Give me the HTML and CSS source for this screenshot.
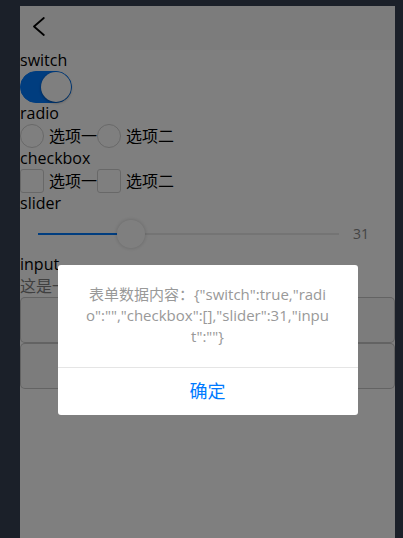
FILE: index.html
```html
<!DOCTYPE html>
<html lang="zh-CN">
<head>
<meta charset="utf-8">
<title>form</title>
<link rel="stylesheet" href="styles.css">
</head>
<body>
<div class="device">
  <header class="navbar">
    <svg class="back" width="20" height="20" viewBox="0 0 20 20"><path d="M13.8 2 L4 10.5 L13.8 19" fill="none" stroke="#000" stroke-width="1.8" stroke-linecap="round" stroke-linejoin="round"/></svg>
  </header>
  <main class="form">
    <div class="label">switch</div>
    <div class="switch on"><span class="knob"></span></div>
    <div class="label">radio</div>
    <div class="options">
      <label class="opt"><span class="radio"></span>选项一</label>
      <label class="opt"><span class="radio"></span>选项二</label>
    </div>
    <div class="label">checkbox</div>
    <div class="options">
      <label class="opt"><span class="check"></span>选项一</label>
      <label class="opt"><span class="check"></span>选项二</label>
    </div>
    <div class="label">slider</div>
    <div class="slider">
      <div class="track">
        <div class="fill" style="width:31%"></div>
        <div class="thumb" style="left:31%"></div>
      </div>
      <span class="value">31</span>
    </div>
    <div class="label">input</div>
    <div class="input">这是一个输入框</div>
    <div class="btn">提交</div>
    <div class="btn">重置</div>
  </main>
  <div class="mask"></div>
  <div class="modal">
    <div class="modal-body">表单数据内容：{"switch":true,"radio":"","checkbox":[],"slider":31,"input":""}</div>
    <div class="modal-foot"><span class="modal-btn">确定</span></div>
  </div>
</div>
</body>
</html>
```

FILE: styles.css
```css
html, body {
  margin: 0;
  padding: 0;
  overflow: hidden;
  background: #1b2029;
}

.device {
  position: relative;
  margin: 6px 0 0 20px;
  width: 375px;
  height: 667px;
  background: #fff;
  font-family: "Open Sans", "Noto Sans CJK SC", sans-serif;
  font-size: 16px;
  color: #000;
  overflow: hidden;
}

.navbar {
  height: 44px;
  box-sizing: border-box;
  padding: 10px 0 0 10px;
  background: #f8f8f8;
  display: flex;
  align-items: flex-start;
}

.back {
  display: block;
}

.form {
  display: flex;
  flex-direction: column;
}

.label {
  height: 21px;
  line-height: 21px;
}

.switch {
  width: 52px;
  height: 32px;
  box-sizing: border-box;
  border: 1px solid #dfdfdf;
  border-radius: 16px;
  background: #dfdfdf;
  position: relative;
}

.switch.on {
  background: #007aff;
  border-color: #007aff;
}

.knob {
  position: absolute;
  top: 0;
  left: 0;
  width: 30px;
  height: 30px;
  border-radius: 15px;
  background: #fff;
  box-shadow: 0 1px 3px rgba(0, 0, 0, 0.4);
}

.switch.on .knob {
  left: 20px;
}

.options {
  display: flex;
  height: 24px;
}

.opt {
  display: flex;
  align-items: center;
  line-height: 24px;
}

.radio,
.check {
  width: 22px;
  height: 22px;
  border: 1px solid #d1d1d1;
  background: #fff;
  margin-right: 5px;
}

.radio {
  border-radius: 50%;
}

.check {
  border-radius: 3px;
}

.slider {
  margin: 10px 18px;
  height: 20px;
  display: flex;
  align-items: center;
}

.track {
  flex: 1;
  height: 2px;
  background: #e9e9e9;
  position: relative;
}

.fill {
  height: 2px;
  background: #007aff;
}

.thumb {
  position: absolute;
  top: -13px;
  width: 28px;
  height: 28px;
  margin-left: -14px;
  border-radius: 50%;
  background: #fff;
  box-shadow: 0 0 4px rgba(0, 0, 0, 0.2);
}

.value {
  width: 3ch;
  margin-left: 1em;
  font-size: 14px;
  line-height: 20px;
  color: #888;
}

.input {
  height: 22px;
  line-height: 22px;
  color: gray;
  overflow: hidden;
  white-space: nowrap;
}

.btn {
  height: 46px;
  box-sizing: border-box;
  border: 1px solid rgba(0, 0, 0, 0.2);
  border-radius: 5px;
  background: #f8f8f8;
  font-size: 18px;
  line-height: 44px;
  text-align: center;
}

.mask {
  position: absolute;
  inset: 0;
  background: rgba(0, 0, 0, 0.5);
}

.modal {
  position: absolute;
  top: 50%;
  left: 50%;
  transform: translate(-50%, -50%);
  width: 300px;
  background: #fff;
  border-radius: 3px;
  text-align: center;
  overflow: hidden;
}

.modal-body {
  padding: 19.5px 24px;
  font-size: 15px;
  line-height: 21px;
  color: #999;
  word-break: break-all;
}

.modal-foot {
  border-top: 1px solid #e5e5e5;
  height: 47px;
  display: flex;
  align-items: center;
  justify-content: center;
}

.modal-btn {
  font-size: 18px;
  color: #007aff;
  line-height: 47px;
}
```
